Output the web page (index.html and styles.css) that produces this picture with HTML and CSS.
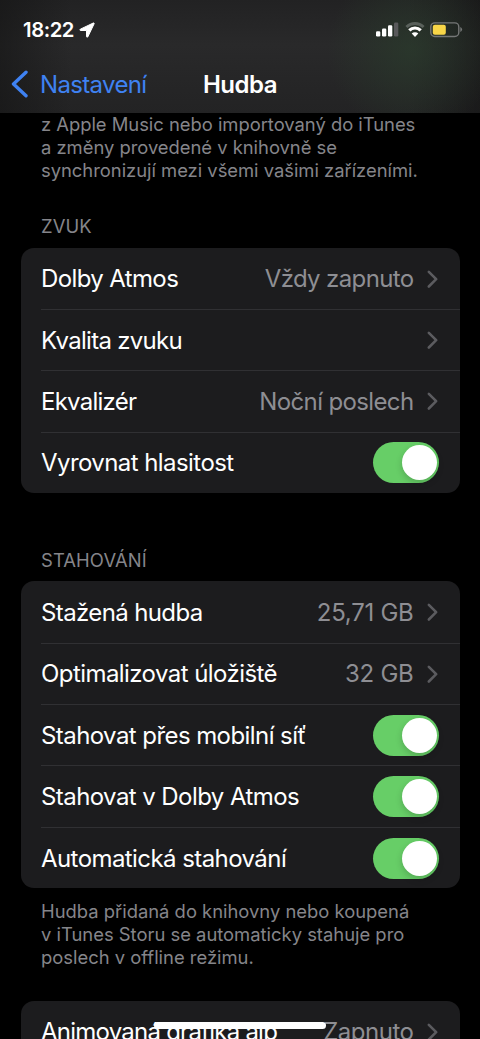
FILE: index.html
```html
<!DOCTYPE html>
<html lang="cs">
<head>
<meta charset="utf-8">
<title>Hudba</title>
<link rel="stylesheet" href="styles.css">
</head>
<body>
<div class="screen">
  <header class="header">
    <div class="status">
      <span class="time">18:22</span>
      <svg class="location" viewBox="0 0 16 16"><path d="M14.300 1 1.300 7.200c-.7.400-.5 1.300.3 1.300h5.900v5.900c0 .9 1 1.100 1.400.300L15.100 1.800c.3-.6-.2-1.100-.8-.8Z" fill="#fff" stroke="#fff" stroke-width="1" stroke-linejoin="round"/></svg>
      <div class="indicators">
        <svg width="23" height="16" viewBox="0 0 23 16"><g fill="#fff"><rect x="0" y="9.300" width="4.300" height="5.200" rx="1.200"/><rect x="6" y="6.500" width="4.300" height="8" rx="1.200"/><rect x="12" y="3.300" width="4.300" height="11.200" rx="1.200"/></g><rect x="18" y=".5" width="4.300" height="14" rx="1.200" fill="#59595b"/></svg>
        <svg width="20" height="16" viewBox="0 0 20 16" fill="none"><path d="M1.400 5a12.300 12.300 0 0 1 17.200 0" stroke="#59605b" stroke-width="2.800"/><path d="M4.300 8.400a8 8 0 0 1 11.400 0" stroke="#fff" stroke-width="3.200"/><path d="M6.700 11.500a4.700 4.700 0 0 1 6.600 0L10 15Z" fill="#fff"/></svg>
        <svg width="33" height="16" viewBox="0 0 33 16"><rect x=".8" y=".9" width="28" height="13.600" rx="4" fill="none" stroke="#757777" stroke-width="1.400"/><rect x="2.800" y="2.700" width="13" height="10" rx="2" fill="#f8d648"/><path d="M30.300 5v5q1.800-.8 1.800-2.500T30.300 5" fill="#757777"/></svg>
      </div>
    </div>
    <nav class="nav">
      <a class="back"><svg width="18" height="28" viewBox="0 0 18 28"><path d="M15 2.200 2.500 14 15 25.800" fill="none" stroke="#3f82f2" stroke-width="3.400" stroke-linecap="round" stroke-linejoin="round"/></svg><span class="back-label">Nastavení</span></a>
      <h1 class="title">Hudba</h1>
    </nav>
  </header>
  <main class="content">
    <p class="note note-top">z Apple Music nebo importovaný do iTunes<br>a změny provedené v knihovně se<br>synchronizují mezi všemi vašimi zařízeními.</p>
    <h2 class="label label-sound">ZVUK</h2>
    <section class="card">
      <div class="row"><span class="name atmos">Dolby Atmos</span><span class="value value-tight">Vždy zapnuto</span><svg class="chev" viewBox="0 0 12 20"><path d="m2 2 8 8-8 8"/></svg></div>
      <div class="row"><span class="name quality">Kvalita zvuku</span><svg class="chev" viewBox="0 0 12 20"><path d="m2 2 8 8-8 8"/></svg></div>
      <div class="row"><span class="name equalizer">Ekvalizér</span><span class="value value-tight">Noční poslech</span><svg class="chev" viewBox="0 0 12 20"><path d="m2 2 8 8-8 8"/></svg></div>
      <div class="row"><span class="name">Vyrovnat hlasitost</span><span class="toggle"><i class="knob"></i></span></div>
    </section>
    <h2 class="label label-download">STAHOVÁNÍ</h2>
    <section class="card">
      <div class="row"><span class="name atmos">Stažená hudba</span><span class="value value-size">25,71 GB</span><svg class="chev" viewBox="0 0 12 20"><path d="m2 2 8 8-8 8"/></svg></div>
      <div class="row"><span class="name">Optimalizovat úložiště</span><span class="value value-size">32 GB</span><svg class="chev" viewBox="0 0 12 20"><path d="m2 2 8 8-8 8"/></svg></div>
      <div class="row"><span class="name">Stahovat přes mobilní síť</span><span class="toggle"><i class="knob"></i></span></div>
      <div class="row"><span class="name">Stahovat v Dolby Atmos</span><span class="toggle"><i class="knob"></i></span></div>
      <div class="row"><span class="name">Automatická stahování</span><span class="toggle"><i class="knob"></i></span></div>
    </section>
    <p class="note note-bottom">Hudba přidaná do knihovny nebo koupená<br>v iTunes Storu se automaticky stahuje pro<br>poslech v offline režimu.</p>
    <section class="card card-last">
      <div class="row"><span class="name equalizer">Animovaná grafika alb</span><span class="value">Zapnuto</span><svg class="chev" viewBox="0 0 12 20"><path d="m2 2 8 8-8 8"/></svg></div>
    </section>
  </main>
  <div class="home"></div>
</div>
</body>
</html>
```
FILE: styles.css
```css
* { box-sizing: border-box; }
body { margin: 0; background: #000; font-family: Inter, "Noto Sans", sans-serif; }
.screen { position: relative; width: 480px; height: 1039px; overflow: hidden; background: #000; color: #fff; }
.header {
  height: 113px;
  background:
    radial-gradient(ellipse 85px 85px at 412px 50px, rgba(42, 60, 44, .7), transparent),
    linear-gradient(90deg, rgba(20, 20, 20, .6), transparent 15%, transparent 85%, rgba(20, 20, 20, .6)),
    linear-gradient(#222223, #29292a 40%, #232324);
}
.status { display: flex; align-items: center; height: 57px; padding: 2px 17px 0 23px; }
.time { font-size: 20.3px; font-weight: 600; letter-spacing: -.45px; }
.location { width: 16px; height: 16px; margin-left: 5px; }
.indicators { display: flex; align-items: center; gap: 5.5px; margin-left: auto; }
.nav { display: grid; grid-template-columns: 1fr auto 1fr; align-items: center; height: 54px; padding: 0 11px; }
.back { display: flex; align-items: center; gap: 11px; color: #3f82f2; font-size: 24px; }
.back-label { letter-spacing: -.65px; }
.title { margin: 0; font-size: 24px; font-weight: 600; letter-spacing: -.5px; }
.content { padding: 0 20.5px; }
.note { margin: 0; padding-left: 20.5px; font-size: 18.4px; line-height: 23px; color: #85858a; white-space: nowrap; }
.note-top { letter-spacing: -.02px; }
.label { margin: 0; padding-left: 20.5px; font-size: 18.4px; font-weight: 400; line-height: 24px; color: #85858a; letter-spacing: .1px; }
.label-sound { margin-top: 32px; margin-bottom: 9.6px; }
.label-download { margin-top: 54.6px; margin-bottom: 9.5px; }
.card { border-radius: 13px; background: #1c1c1e; overflow: hidden; }
.note-bottom { margin-top: 11.4px; }
.card-last { margin-top: 32px; }
.row { position: relative; display: flex; align-items: center; height: 61.4px; padding: 1px 20.5px 0; font-size: 24px; white-space: nowrap; }
.row + .row::before { content: ""; position: absolute; left: 20.5px; right: 0; top: 0; height: 1px; background: #303033; }
.name { letter-spacing: -.57px; }
.atmos { letter-spacing: -.62px; }
.quality { letter-spacing: -.7px; }
.equalizer { letter-spacing: -.76px; }
.value { margin-left: auto; color: #8e8e93; letter-spacing: -.47px; }
.value-tight { letter-spacing: -.63px; }
.value-size { letter-spacing: -.27px; }
.chev { width: 11px; height: 18.4px; margin: 0 1.5px 0 13px; fill: none; stroke: #5b5b5f; stroke-width: 2.8; stroke-linecap: round; stroke-linejoin: round; }
.name + .chev { margin-left: auto; }
.toggle { display: flex; justify-content: flex-end; width: 66px; height: 41px; margin-left: auto; padding: 3px 2px 3px 3px; border-radius: 21px; background: #67ce67; }
.knob { width: 35px; height: 35px; border-radius: 50%; background: #fff; box-shadow: 0 3px 7px rgba(0, 0, 0, .18); }
.home { position: absolute; left: 154px; top: 1022px; width: 172px; height: 7px; border-radius: 4px; background: #fff; }
```
